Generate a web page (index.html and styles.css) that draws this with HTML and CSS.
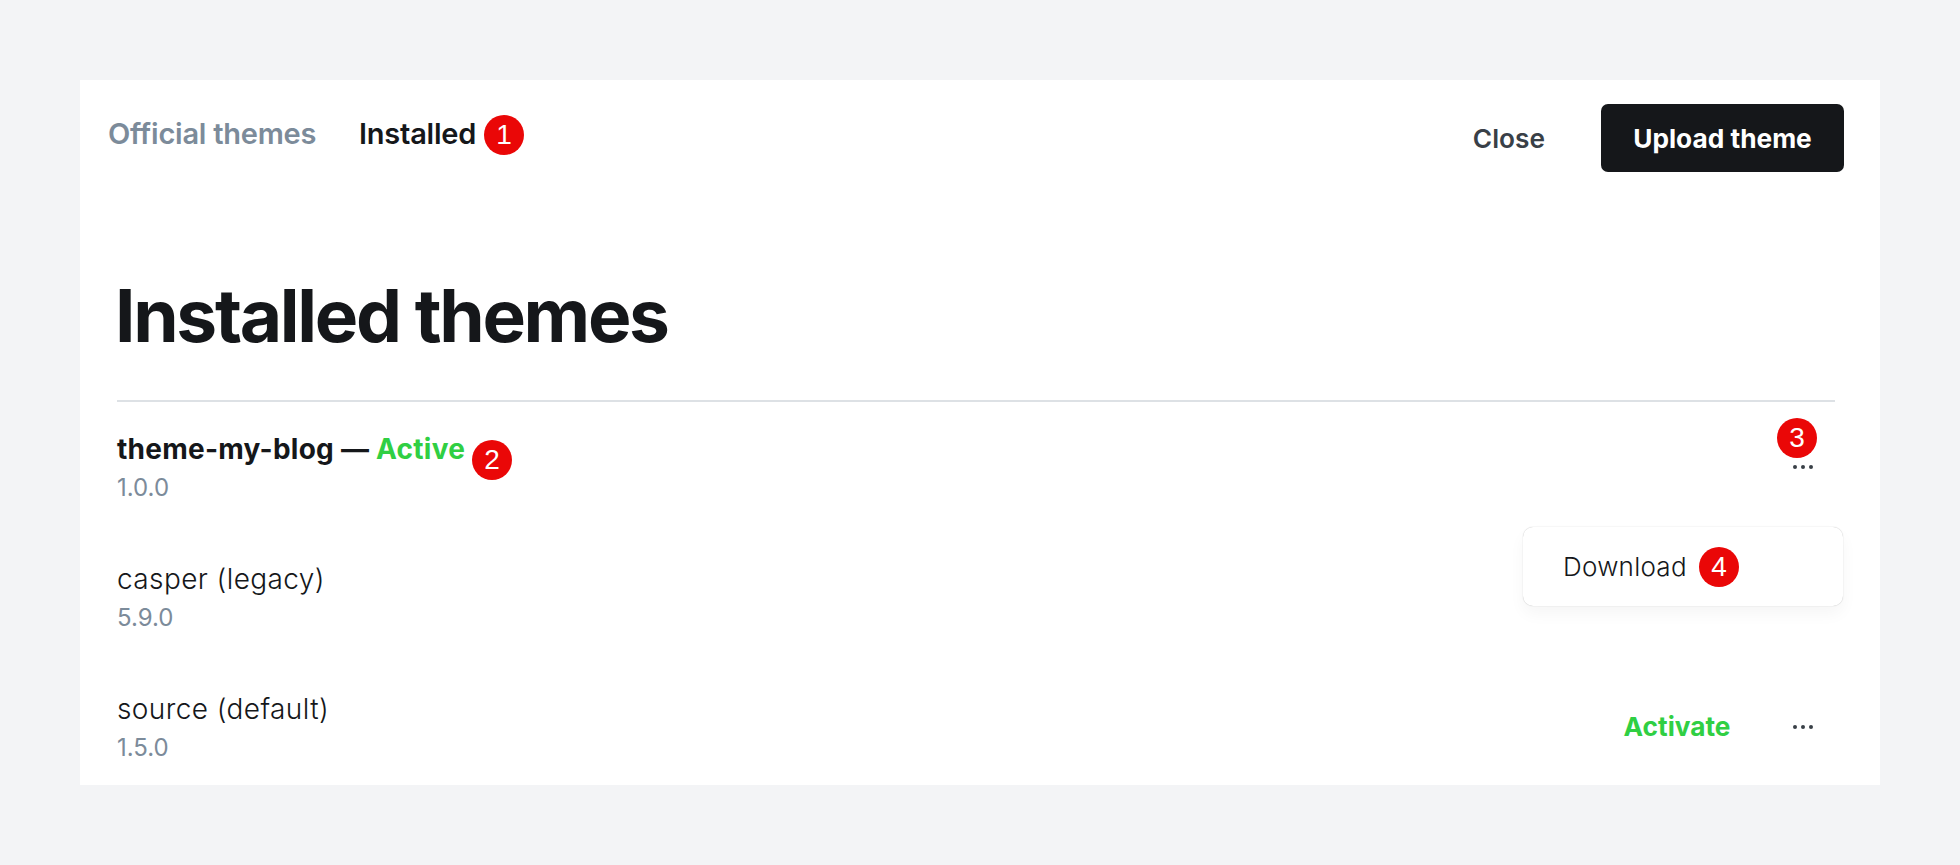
FILE: index.html
```html
<!DOCTYPE html>
<html lang="en">

<head>
    <meta charset="UTF-8">
    <meta name="viewport" content="width=device-width, initial-scale=1.0">
    <title>Installed themes</title>
    <link rel="stylesheet" href="styles.css">
</head>

<body>
    <div class="panel">
        <div class="top-bar">
            <div class="tabs">
                <span class="tab">Official themes</span>
                <span class="tab tab-current">Installed</span>
            </div>
            <div class="actions">
                <span class="close-link">Close</span>
                <span class="upload-btn">Upload theme</span>
            </div>
        </div>

        <h1 class="page-title">Installed themes</h1>

        <div class="theme-list">
            <div class="theme-row">
                <div class="theme-info">
                    <div class="theme-name theme-name-active">theme-my-blog — <span class="active-label">Active</span></div>
                    <div class="theme-version">1.0.0</div>
                </div>
                <div class="theme-actions">
                    <span class="more-btn"><i></i><i></i><i></i></span>
                </div>
            </div>
            <div class="theme-row">
                <div class="theme-info">
                    <div class="theme-name">casper (legacy)</div>
                    <div class="theme-version">5.9.0</div>
                </div>
                <div class="theme-actions">
                    <span class="activate-link">Activate</span>
                    <span class="more-btn"><i></i><i></i><i></i></span>
                </div>
            </div>
            <div class="theme-row">
                <div class="theme-info">
                    <div class="theme-name">source (default)</div>
                    <div class="theme-version">1.5.0</div>
                </div>
                <div class="theme-actions">
                    <span class="activate-link">Activate</span>
                    <span class="more-btn"><i></i><i></i><i></i></span>
                </div>
            </div>
        </div>

        <!-- Открытое меню поверх второй строки -->
        <div class="dropdown">
            <span class="dropdown-item">Download</span>
        </div>

        <!-- Номера-аннотации поверх интерфейса -->
        <span class="marker marker-1">1</span>
        <span class="marker marker-2">2</span>
        <span class="marker marker-3">3</span>
        <span class="marker marker-4">4</span>
    </div>
</body>

</html>
```

FILE: styles.css
```css
html, body {
    margin: 0;
    padding: 0;
}

body {
    background: #f3f4f6;
    padding: 80px;
    height: 865px;
    box-sizing: border-box;
    overflow: hidden;
    font-family: Inter, "Noto Sans", sans-serif;
    color: #15171a;
}

.panel {
    position: relative;
    width: 1800px;
    height: 705px;
    background: #ffffff;
    overflow: hidden;
}

.top-bar {
    display: flex;
    justify-content: space-between;
    align-items: flex-start;
    padding: 24px 36px 0 28px;
}

.tabs {
    display: flex;
    gap: 43px;
    font-size: 29px;
    line-height: 40px;
    font-weight: 600;
    letter-spacing: -0.25px;
    padding-top: 10px;
}

.tab {
    color: #7c8b9a;
}

.tab-current {
    color: #15171a;
    font-weight: 575;
    letter-spacing: -0.25px;
}

.actions {
    display: flex;
    align-items: center;
    gap: 56px;
}

.close-link {
    font-size: 26.25px;
    font-weight: 600;
    color: #394047;
}

.upload-btn {
    display: flex;
    align-items: center;
    justify-content: center;
    width: 243px;
    height: 68px;
    background: #15171a;
    border-radius: 7px;
    color: #ffffff;
    font-size: 26.25px;
    font-weight: 700;
}

.page-title {
    margin: 0;
    padding: 100px 0 0 35px;
    font-size: 73px;
    line-height: 88px;
    font-weight: 700;
    letter-spacing: -2.3px;
}

.theme-list {
    margin: 40px 45px 0 37px;
    border-top: 2px solid #dde1e5;
}

.theme-row {
    display: flex;
    justify-content: space-between;
    align-items: center;
    height: 130px;
}

.theme-info {
    padding-top: 3px;
}

.theme-name {
    font-size: 28px;
    line-height: 38px;
    font-weight: 350;
    letter-spacing: 0.4px;
}

.theme-name-active {
    font-weight: 700;
    letter-spacing: 0.25px;
}

.active-label {
    color: #30cf43;
}

.theme-version {
    margin-top: 1px;
    font-size: 24px;
    line-height: 38px;
    color: #7c8b9a;
}

.theme-actions {
    display: flex;
    align-items: center;
    gap: 62px;
    padding-right: 22px;
}

.activate-link {
    padding-bottom: 1px;
    font-size: 26.25px;
    font-weight: 700;
    color: #30cf43;
}

.more-btn {
    display: flex;
    gap: 3.5px;
}

.more-btn i {
    display: block;
    width: 4.5px;
    height: 4.5px;
    border-radius: 50%;
    background: #394047;
}

.dropdown {
    position: absolute;
    left: 1443px;
    top: 447px;
    width: 320px;
    height: 79px;
    box-sizing: border-box;
    display: flex;
    align-items: center;
    padding-left: 40px;
    background: #ffffff;
    border-radius: 10px;
    box-shadow: 0 0 1px rgba(0, 0, 0, 0.3), 0 8px 16px rgba(0, 0, 0, 0.04);
}

.dropdown-item {
    font-size: 26px;
    font-weight: 350;
    letter-spacing: 0.25px;
}

.marker {
    position: absolute;
    width: 40px;
    height: 40px;
    border-radius: 50%;
    background: #ea0707;
    color: #ffffff;
    font-family: "Liberation Sans", Arial, sans-serif;
    font-size: 28px;
    line-height: 40px;
    text-align: center;
}

.marker-1 { left: 404px; top: 35px; }
.marker-2 { left: 392px; top: 360px; }
.marker-3 { left: 1697px; top: 338px; }
.marker-4 { left: 1619px; top: 467px; }
```
